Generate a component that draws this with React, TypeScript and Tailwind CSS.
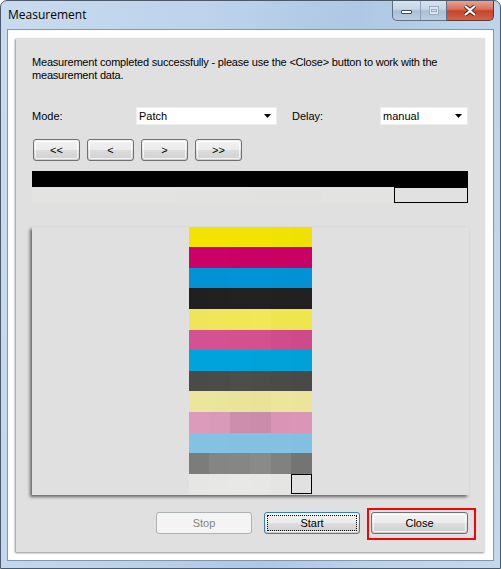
import type { ReactNode } from "react";

const FONT = "font-['Liberation_Sans',Arial,sans-serif]";

// colour of each patch, row by row, six columns
const PATCH_ROWS: { h: string; cells: string[] }[] = [
  { h: "h-[20px]", cells: ["#f2e400", "#f2e400", "#f2e400", "#f2e400", "#f1e300", "#f0e200"] },
  { h: "h-[21px]", cells: ["#cc0066", "#cc0066", "#cb0066", "#cb0066", "#ca0065", "#c90065"] },
  { h: "h-[20px]", cells: ["#0092d4", "#0092d4", "#0093d5", "#0093d5", "#0092d4", "#0092d3"] },
  { h: "h-[21px]", cells: ["#202020", "#212120", "#222221", "#222221", "#212120", "#212121"] },
  { h: "h-[21px]", cells: ["#efe55a", "#f0e658", "#f1e756", "#f1e757", "#efe54e", "#efe54c"] },
  { h: "h-[20px]", cells: ["#d55292", "#d55191", "#d4508f", "#d4508f", "#d04c8c", "#ce4a8a"] },
  { h: "h-[21px]", cells: ["#00a3db", "#00a3db", "#00a3db", "#00a2da", "#00a2da", "#00a0d9"] },
  { h: "h-[20px]", cells: ["#4a4a48", "#4b4b49", "#4d4d4a", "#4c4c49", "#4a4a47", "#494947"] },
  { h: "h-[21px]", cells: ["#ebe59e", "#eae59c", "#e9e49a", "#e8e398", "#ece69c", "#ebe59c"] },
  { h: "h-[21px]", cells: ["#dc9bbb", "#d999b9", "#cd8dad", "#cb8cab", "#da94b6", "#db95b7"] },
  { h: "h-[20px]", cells: ["#84c2e1", "#84c2e1", "#83c1e0", "#83c1e0", "#82c1e0", "#81c0e0"] },
  { h: "h-[21px]", cells: ["#7c7c7b", "#858584", "#868685", "#8a8a89", "#818180", "#747473"] },
  { h: "h-[20px]", cells: ["#e6e6e4", "#e7e7e5", "#e8e8e6", "#e7e7e5", "#e5e5e3", "#e1e1e1"] },
];

const COL_W = ["w-[20px]", "w-[21px]", "w-[20px]", "w-[21px]", "w-[20px]", "w-[21px]"];

function WinButton({
  children,
  className = "",
  state = "normal",
}: {
  children: ReactNode;
  className?: string;
  state?: "normal" | "focus" | "disabled";
}) {
  if (state === "disabled") {
    return (
      <div
        className={`flex shrink-0 items-center justify-center rounded-[3px] border border-[#adb2b5] bg-[#f4f4f4] text-[11px] text-[#838383] ${className}`}
      >
        {children}
      </div>
    );
  }
  const border = state === "focus" ? "border-[#3c7fb1]" : "border-[#707070]";
  return (
    <div
      className={`relative flex shrink-0 items-center justify-center rounded-[3px] border ${border} bg-[linear-gradient(#f2f2f2_0%,#ebebeb_50%,#dddddd_51%,#cfcfcf_100%)] text-[11px] text-black ${className}`}
    >
      <div className="absolute inset-[1px] rounded-[2px] border border-white/70" />
      {state === "focus" && (
        <div className="absolute inset-[2px] border border-dotted border-black" />
      )}
      <span className="relative">{children}</span>
    </div>
  );
}

function ComboBox({ value, className }: { value: string; className: string }) {
  return (
    <div
      className={`flex h-[18px] shrink-0 items-center justify-between border border-[#ececec] bg-white pl-[2px] pr-[5px] text-[11px] text-black ${className}`}
    >
      <span>{value}</span>
      <svg width="7" height="4" viewBox="0 0 7 4">
        <path d="M0 0h7L3.5 4z" fill="#000" />
      </svg>
    </div>
  );
}

export default function App() {
  return (
    <div
      className={`relative flex h-[569px] w-[501px] flex-col overflow-hidden rounded-t-[7px] border border-[#4b5a6b] bg-[linear-gradient(100deg,#c9dbef_0%,#bcd3ea_35%,#aec8e3_60%,#bcd3eb_80%,#c3d8ed_100%)] ${FONT}`}
    >
      {/* title bar */}
      <div className="flex h-[28px] shrink-0 items-center pl-[7px] font-['Open_Sans',sans-serif] text-[12px] text-black">
        Measurement
      </div>

      {/* caption buttons */}
      <div className="absolute right-[6px] top-[-1px] flex h-[21px]">
        <div className="flex w-[55px] overflow-hidden rounded-bl-[5px] border border-t-0 border-[#5f6f82] bg-[linear-gradient(#d8e4f1_0%,#c6d6e8_45%,#aabed6_55%,#b9cde2_100%)]">
          <div className="flex w-[28px] items-center justify-center border-r border-[#8d9fb4]">
            <div className="mt-[4px] h-[4px] w-[11px] rounded-[1px] border border-[#3b4b5e] bg-white" />
          </div>
          <div className="flex flex-1 items-center justify-center">
            <div className="flex h-[9px] w-[10px] items-center justify-center border border-[#9aabbd] bg-[#dbe5f0]">
              <div className="h-[3px] w-[6px] border border-[#9aabbd]" />
            </div>
          </div>
        </div>
        <div className="flex w-[47px] items-center justify-center rounded-br-[5px] border border-l-0 border-t-0 border-[#5f3a33] bg-[linear-gradient(#e9a99a_0%,#d9715b_45%,#c7432a_55%,#d4614a_100%)]">
          <svg width="14" height="11" viewBox="0 0 14 11">
            <path
              d="M2 1l5 4 5-4M2 10l5-4 5 4"
              stroke="#3a2a28"
              strokeWidth="4"
              fill="none"
            />
            <path
              d="M2 1l5 4 5-4M2 10l5-4 5 4"
              stroke="#ffffff"
              strokeWidth="2.2"
              fill="none"
            />
          </svg>
        </div>
      </div>

      {/* client area */}
      <div className="mx-[6px] mb-[7px] flex flex-1 flex-col border border-[#8297ae] bg-white px-[8px] py-[8px]">
        <div className="flex flex-1 flex-col bg-[#e0e0e0] pl-[16px] pr-[16px] pt-[18px] shadow-[-1px_1px_2px_rgba(0,0,0,0.45)]">
          <p className="whitespace-nowrap text-[11px] leading-[13px] tracking-[-0.2px] text-black">
            Measurement completed successfully - please use the &lt;Close&gt; button to work with the
            <br />
            measurement data.
          </p>

          <div className="mt-[25px] flex h-[18px] items-center text-[11px] text-black">
            <span className="w-[104px] shrink-0">Mode:</span>
            <ComboBox value="Patch" className="w-[141px]" />
            <span className="ml-[15px] w-[88px] shrink-0">Delay:</span>
            <ComboBox value="manual" className="w-[88px]" />
          </div>

          <div className="mt-[14px] flex gap-[7px] pl-[1px]">
            <WinButton className="h-[22px] w-[47px]">&lt;&lt;</WinButton>
            <WinButton className="h-[22px] w-[47px]">&lt;</WinButton>
            <WinButton className="h-[22px] w-[47px]">&gt;</WinButton>
            <WinButton className="h-[22px] w-[47px]">&gt;&gt;</WinButton>
          </div>

          <div className="mt-[10px] w-[436px]">
            <div className="h-[16px] bg-black" />
            <div className="flex h-[16px]">
              <div className="flex-1 bg-[#e3e3e1]" />
              <div className="flex-1 bg-[#e3e3e1]" />
              <div className="flex-1 bg-[#e2e2e0]" />
              <div className="flex-1 bg-[#e1e1df]" />
              <div className="flex-1 bg-[#e3e3e1]" />
              <div className="flex-1 border border-black bg-[#e1e1e1]" />
            </div>
          </div>

          <div className="mt-[24px] h-[268px] w-[437px] bg-[#e0e0e0] pl-[157px] shadow-[-2px_2px_3px_rgba(0,0,0,0.55)]">
            <div className="flex w-[123px] flex-col">
              {PATCH_ROWS.map((row, r) => (
                <div key={r} className={`flex ${row.h}`}>
                  {row.cells.map((c, i) => (
                    <div
                      key={i}
                      className={`${COL_W[i]} ${
                        r === PATCH_ROWS.length - 1 && i === 5 ? "border border-black" : ""
                      }`}
                      style={{ backgroundColor: c }}
                    />
                  ))}
                </div>
              ))}
            </div>
          </div>

          <div className="mt-[13px] flex items-start pl-[124px]">
            <WinButton state="disabled" className="mt-[4px] h-[22px] w-[96px]">
              Stop
            </WinButton>
            <WinButton state="focus" className="ml-[12px] mt-[4px] h-[22px] w-[96px]">
              Start
            </WinButton>
            <div className="ml-[7px] shrink-0 border-2 border-[#ff0000] pb-[4px] pl-[2px] pr-[6px] pt-[2px]">
              <WinButton className="h-[22px] w-[97px]">Close</WinButton>
            </div>
          </div>
        </div>
      </div>
    </div>
  );
}
